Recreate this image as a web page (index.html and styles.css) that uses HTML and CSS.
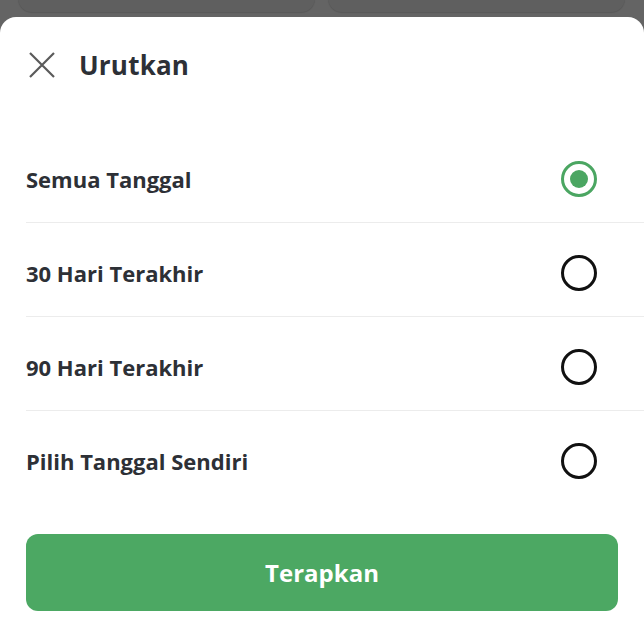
FILE: index.html
```html
<!DOCTYPE html>
<html>
<head>
<meta charset="utf-8">
<link rel="stylesheet" href="styles.css">
</head>
<body>
<div class="backdrop">
  <div class="card"></div>
  <div class="card"></div>
</div>
<div class="sheet">
  <div class="header">
    <svg class="close" width="26" height="26" viewBox="0 0 26 26"><path d="M1 1 L25 25 M25 1 L1 25" stroke="#5a5a5a" stroke-width="2.2" fill="none"/></svg>
    <h1 class="title">Urutkan</h1>
  </div>
  <div class="list">
    <div class="row"><span class="label">Semua Tanggal</span><span class="radio checked"></span></div>
    <div class="row"><span class="label">30 Hari Terakhir</span><span class="radio"></span></div>
    <div class="row"><span class="label">90 Hari Terakhir</span><span class="radio"></span></div>
    <div class="row last"><span class="label">Pilih Tanggal Sendiri</span><span class="radio"></span></div>
  </div>
  <div class="footer">
    <button class="apply">Terapkan</button>
  </div>
</div>
</body>
</html>
```
FILE: styles.css
```css
html, body {
  margin: 0;
  padding: 0;
}
body {
  background: #646464;
  font-family: "Open Sans", "Noto Sans", sans-serif;
  width: 644px;
  height: 630px;
  overflow: hidden;
}
.backdrop {
  height: 17px;
  display: flex;
  gap: 13px;
  padding: 0 19px 0 18px;
  overflow: hidden;
}
.card {
  flex: 1;
  height: 30px;
  margin-top: -18px;
  background: #5f5f5f;
  border-radius: 14px;
  box-shadow: 0 1px 1px rgba(0,0,0,0.12);
}
.sheet {
  background: #fff;
  border-radius: 16px 16px 0 0;
  height: 613px;
}
.header {
  display: flex;
  padding: 34px 0 0 29px;
  height: 78px;
  box-sizing: border-box;
  align-items: flex-start;
}
.close {
  display: block;
  margin-top: 1px;
}
.title {
  margin: 0 0 0 24px;
  font-size: 26px;
  font-weight: 700;
  color: #2d3036;
  line-height: 28px;
  letter-spacing: 0.2px;
}
.list {
  margin-left: 26px;
  padding-top: 34px;
}
.row {
  display: flex;
  align-items: center;
  justify-content: space-between;
  padding: 32px 47px 25px 0;
  border-bottom: 1px solid #ececec;
}
.row.last {
  border-bottom: none;
}
.label {
  font-size: 22px;
  font-weight: 700;
  color: #2d3036;
  line-height: 26px;
}
.radio {
  width: 36px;
  height: 36px;
  box-sizing: border-box;
  border: 3px solid #111;
  border-radius: 50%;
  display: flex;
  align-items: center;
  justify-content: center;
}
.radio.checked {
  border-color: #4ba662;
}
.radio.checked::after {
  content: "";
  width: 18px;
  height: 18px;
  border-radius: 50%;
  background: #4ba662;
}
.footer {
  padding: 30px 26px 0 26px;
}
.apply {
  display: block;
  width: 100%;
  height: 77px;
  border: none;
  border-radius: 12px;
  background: #4ca863;
  color: #fff;
  font-family: "Open Sans", "Noto Sans", sans-serif;
  font-size: 24px;
  font-weight: 700;
}
```
